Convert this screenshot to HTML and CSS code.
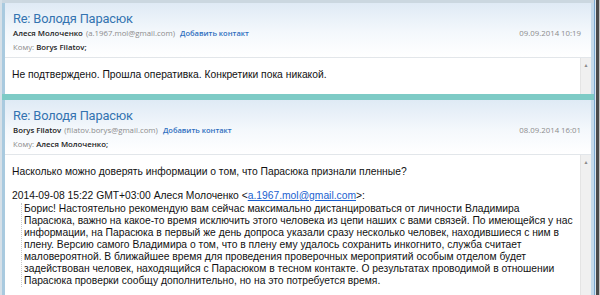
FILE: index.html
```html
<!DOCTYPE html>
<html lang="ru">
<head>
  <meta charset="UTF-8">
  <title>Re: Володя Парасюк</title>
  <link rel="stylesheet" href="styles.css">
</head>
<body>
  <div class="frame">
    <div class="list">
      <div class="top-edge"></div>

      <section class="msg">
        <header class="msg-head">
          <h2 class="subject">Re: Володя Парасюк</h2>
          <div class="meta-row">
            <span class="from">Алеся Молоченко</span>
            <span class="addr">(a.1967.mol@gmail.com)</span>
            <a class="add" href="#">Добавить контакт</a>
            <span class="date">09.09.2014 10:19</span>
          </div>
          <div class="to-row">
            <span class="to-label">Кому:</span>
            <span class="to">Borys Filatov;</span>
          </div>
        </header>
        <div class="msg-body short">
          <div class="body-text">
            <div>Не подтверждено. Прошла оперативка. Конкретики пока никакой.</div>
          </div>
          <div class="scroll"><span class="arrow">&#9650;</span></div>
        </div>
      </section>

      <div class="divider"></div>

      <section class="msg">
        <header class="msg-head">
          <h2 class="subject">Re: Володя Парасюк</h2>
          <div class="meta-row">
            <span class="from">Borys Filatov</span>
            <span class="addr">(filatov.borys@gmail.com)</span>
            <a class="add" href="#">Добавить контакт</a>
            <span class="date">08.09.2014 16:01</span>
          </div>
          <div class="to-row">
            <span class="to-label">Кому:</span>
            <span class="to">Алеся Молоченко;</span>
          </div>
        </header>
        <div class="msg-body">
          <div class="body-text">
            <div>Насколько можно доверять информации о том, что Парасюка признали пленные?</div>
            <div class="quote-head">2014-09-08 15:22 GMT+03:00 Алеся Молоченко &lt;<a href="#">a.1967.mol@gmail.com</a>&gt;:</div>
            <blockquote class="quote">
              Борис! Настоятельно рекомендую вам сейчас максимально дистанцироваться от личности Владимира<br>
              Парасюка, важно на какое-то время исключить этого человека из цепи наших с вами связей. По имеющейся у нас<br>
              информации, на Парасюка в первый же день допроса указали сразу несколько человек, находившиеся с ним в<br>
              плену. Версию самого Владимира о том, что в плену ему удалось сохранить инкогнито, служба считает<br>
              маловероятной. В ближайшее время для проведения проверочных мероприятий особым отделом будет<br>
              задействован человек, находящийся с Парасюком в тесном контакте. О результатах проводимой в отношении<br>
              Парасюка проверки сообщу дополнительно, но на это потребуется время.
            </blockquote>
          </div>
          <div class="scroll"><span class="arrow">&#9650;</span></div>
        </div>
      </section>
    </div>
    <div class="edge"></div>
  </div>
</body>
</html>
```

FILE: styles.css
```css
:root {
  --link: #2f6fc0;
  --subject: #3473b0;
  --muted: #8c8c8c;
  --text: #111111;
  --teal: #7ecbc6;
  --frame-blue: #a9cadf;
}

body {
  margin: 0;
  background: #ffffff;
  font-family: 'Open Sans', 'Noto Sans', sans-serif;
  height: 295px;
  overflow: hidden;
}

.frame {
  display: flex;
  height: 295px;
}

.list {
  width: 595px;
  display: flex;
  flex-direction: column;
  border-left: 2px solid #d6e0e8;
  border-right: 1px solid #7ca8d0;
  box-sizing: border-box;
  overflow: hidden;
}

.edge {
  width: 5px;
  background: linear-gradient(90deg, #d9e6f0 0 1px, #4a4a4a 1px 4px, #bdbdbd 4px);
}

.top-edge {
  flex-shrink: 0;
  height: 3px;
  background: #cbd7e0;
}

.msg {
  flex-shrink: 0;
  display: flex;
  flex-direction: column;
  border-left: 3px solid var(--frame-blue);
  border-right: 3px solid #c4daeb;
}

.msg:last-child {
  flex: 1;
}

.msg-head {
  padding: 8px 10px 4px 8px;
  border-bottom: 1px solid #e2e6ea;
  background: linear-gradient(180deg, #dfeaf5 0%, #f4f8fc 55%, #ffffff 100%);
}

.subject {
  margin: 0;
  font-family: Roboto, 'Open Sans', sans-serif;
  font-size: 12.8px;
  font-weight: 400;
  line-height: 16px;
  letter-spacing: -0.15px;
  color: var(--subject);
  white-space: nowrap;
}

.meta-row,
.to-row {
  display: flex;
  align-items: center;
  gap: 3px;
  font-size: 7.8px;
  line-height: 12px;
  white-space: nowrap;
}

.to-row {
  margin-top: 2px;
  gap: 2px;
}

.from,
.to {
  color: #222222;
  font-weight: 600;
}

.addr,
.to-label {
  color: var(--muted);
}

.add {
  margin-left: 2px;
  color: var(--link);
  font-size: 7.5px;
  font-weight: 600;
  text-decoration: none;
}

.date {
  margin-left: auto;
  color: var(--muted);
}

.msg-body {
  display: flex;
  flex: 1;
  background: #ffffff;
}

.msg-body.short {
  flex: none;
  height: 36px;
}

.body-text {
  flex: 1;
  padding: 11px 7px 0;
  font-family: 'Liberation Sans', Arial, sans-serif;
  font-size: 10.3px;
  line-height: 12px;
  color: var(--text);
  white-space: nowrap;
}

.body-text a {
  color: #1a5fd0;
}

.quote-head {
  margin-top: 12px;
}

.quote {
  margin: 1px 0 0 9px;
  padding-left: 2px;
  border-left: 1px dotted #c8c8c8;
}

.scroll {
  width: 10px;
  background: #f0f0f0;
  border-left: 1px solid #e4e4e4;
  text-align: center;
}

.arrow {
  display: block;
  margin-top: 4px;
  font-size: 5px;
  line-height: 6px;
  color: #8a8a8a;
}

.divider {
  flex-shrink: 0;
  height: 6px;
  background: var(--teal);
}
```
